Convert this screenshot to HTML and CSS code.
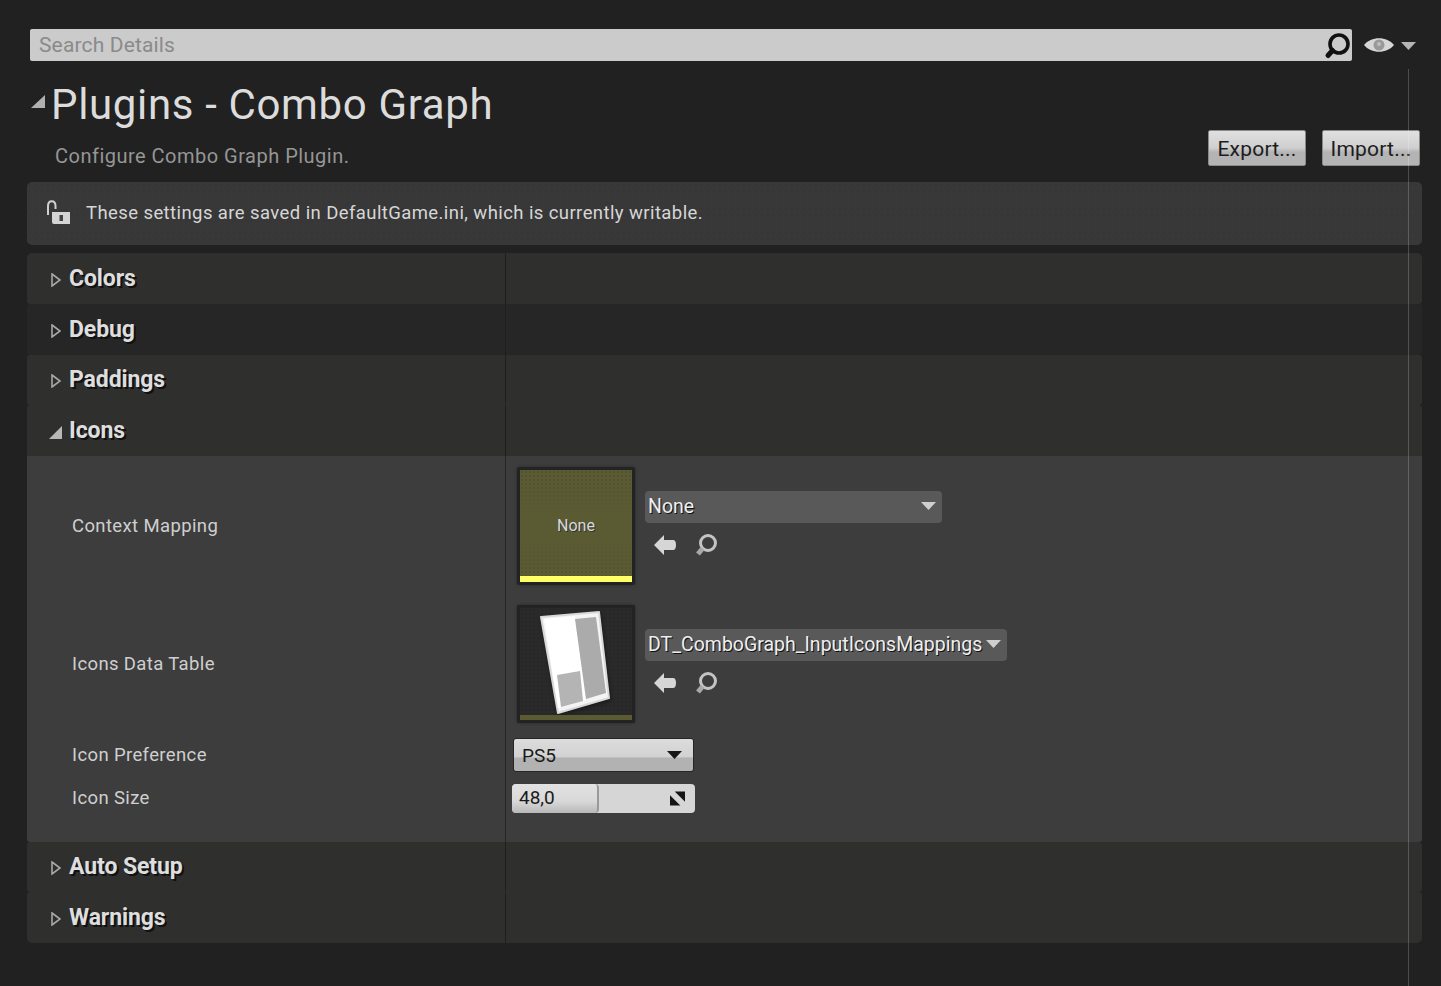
FILE: index.html
```html
<!DOCTYPE html>
<html lang="en">
<head>
  <meta charset="UTF-8">
  <title>Plugins - Combo Graph</title>
  <link rel="stylesheet" href="styles.css">
</head>
<body>
  <div class="search-row">
    <div class="search-box">
      <span class="search-text">Search Details</span>
      <svg class="search-icon" width="30" height="30" viewBox="0 0 30 30"><circle cx="17" cy="14" r="9" fill="none" stroke="#111" stroke-width="3.6"/><path d="M10.5 20.5 L6 25.5" stroke="#111" stroke-width="5" stroke-linecap="round"/></svg>
    </div>
    <svg class="eye" width="32" height="18" viewBox="0 0 32 18"><path d="M1 9 C8 0 24 0 31 9 C24 18 8 18 1 9Z" fill="#d6d6d6"/><circle cx="16" cy="9" r="5.5" fill="#999"/><circle cx="16" cy="8" r="2" fill="#bdbdbd"/></svg>
    <svg class="caret" width="15" height="8" viewBox="0 0 15 8"><path d="M0 0 H15 L7.5 8Z" fill="#b5b5b5"/></svg>
  </div>

  <div class="head">
    <div class="head-left">
      <div class="title-line">
        <svg class="title-arrow" width="14" height="13" viewBox="0 0 14 13"><path d="M14 0 V13 H0Z" fill="#b0b0b0"/></svg>
        <h1 class="title">Plugins - Combo Graph</h1>
      </div>
      <p class="subtitle">Configure Combo Graph Plugin.</p>
    </div>
    <div class="head-buttons">
      <button class="btn">Export...</button>
      <button class="btn">Import...</button>
    </div>
  </div>

  <div class="notice">
    <svg class="lock" width="26" height="26" viewBox="0 0 26 26"><path d="M3 15 V6 C3 -0.5 10.5 -0.5 10.5 6 V9" fill="none" stroke="#cfcfcf" stroke-width="2"/><path d="M7 12 H25 V24 H9 Q7 24 7 22Z" fill="#d4d4d4"/><rect x="14.5" y="15" width="3.5" height="6" fill="#444"/></svg>
    <span>These settings are saved in DefaultGame.ini, which is currently writable.</span>
  </div>

  <div class="sections">
    <div class="section-row first">
      <div class="section-name"><svg class="closed" width="10" height="14" viewBox="0 0 10 14"><path d="M1 1 L9 7 L1 13Z" fill="none" stroke="#a8a8a8" stroke-width="1.6"/></svg>Colors</div>
    </div>
    <div class="section-row dark">
      <div class="section-name"><svg class="closed" width="10" height="14" viewBox="0 0 10 14"><path d="M1 1 L9 7 L1 13Z" fill="none" stroke="#a8a8a8" stroke-width="1.6"/></svg>Debug</div>
    </div>
    <div class="section-row short">
      <div class="section-name"><svg class="closed" width="10" height="14" viewBox="0 0 10 14"><path d="M1 1 L9 7 L1 13Z" fill="none" stroke="#a8a8a8" stroke-width="1.6"/></svg>Paddings</div>
    </div>
    <div class="section-row open-row">
      <div class="section-name"><svg class="open" width="13" height="13" viewBox="0 0 13 13"><path d="M13 0 V13 H0Z" fill="#b8b8b8"/></svg>Icons</div>
    </div>

    <div class="section-body">
      <div class="prop asset-prop">
        <div class="prop-name">Context Mapping</div>
        <div class="prop-value">
          <div class="thumb thumb-none">
            <span class="thumb-label">None</span>
            <div class="thumb-bar yellow"></div>
          </div>
          <div class="asset-side">
            <div class="combo combo-wide"><span>None</span><svg width="15" height="8" viewBox="0 0 15 8"><path d="M0 0 H15 L7.5 8Z" fill="#cfcfcf"/></svg></div>
            <div class="asset-tools">
              <svg width="24" height="22" viewBox="0 0 24 22"><path d="M1 11 L11 1 V6 H20 Q23 6 23 11 Q23 16 20 16 H11 V21Z" fill="#d6d6d6"/></svg>
              <svg width="24" height="24" viewBox="0 0 24 24"><circle cx="14" cy="10" r="7.5" fill="none" stroke="#c4c4c4" stroke-width="3"/><path d="M8.5 15.5 L4 21" stroke="#a8a8a8" stroke-width="5"/></svg>
            </div>
          </div>
        </div>
      </div>

      <div class="prop asset-prop">
        <div class="prop-name">Icons Data Table</div>
        <div class="prop-value">
          <div class="thumb thumb-table">
            <svg class="table-art" width="112" height="112" viewBox="0 0 112 112">
              <path d="M21 9 L79 4 L89 90 L38 105Z" fill="#f4f4f4" stroke="#d8d8d8" stroke-width="2" stroke-linejoin="round"/>
              <path d="M24 11 L55 8 L66 92 L38 100Z" fill="#fff"/>
              <path d="M55 11 L76 9 L86 85 L66 91Z" fill="#ababab"/>
              <path d="M37 67 L60 63 L63 93 L41 99Z" fill="#b4b4b4"/>
            </svg>
            <div class="thumb-bar olive"></div>
          </div>
          <div class="asset-side">
            <div class="combo"><span>DT_ComboGraph_InputIconsMappings</span><svg width="15" height="8" viewBox="0 0 15 8"><path d="M0 0 H15 L7.5 8Z" fill="#cfcfcf"/></svg></div>
            <div class="asset-tools">
              <svg width="24" height="22" viewBox="0 0 24 22"><path d="M1 11 L11 1 V6 H20 Q23 6 23 11 Q23 16 20 16 H11 V21Z" fill="#d6d6d6"/></svg>
              <svg width="24" height="24" viewBox="0 0 24 24"><circle cx="14" cy="10" r="7.5" fill="none" stroke="#c4c4c4" stroke-width="3"/><path d="M8.5 15.5 L4 21" stroke="#a8a8a8" stroke-width="5"/></svg>
            </div>
          </div>
        </div>
      </div>

      <div class="prop small-prop pref-prop">
        <div class="prop-name">Icon Preference</div>
        <div class="prop-value">
          <div class="select"><span>PS5</span><svg width="15" height="8" viewBox="0 0 15 8"><path d="M0 0 H15 L7.5 8Z" fill="#151515"/></svg></div>
        </div>
      </div>

      <div class="prop small-prop size-prop">
        <div class="prop-name">Icon Size</div>
        <div class="prop-value">
          <div class="slider">
            <div class="slider-fill">48,0</div>
            <svg class="slider-icon" width="15" height="15" viewBox="0 0 16 15"><path d="M5 0 H16 V11Z" fill="#151515"/><path d="M0 4 L11 15 H0Z" fill="#151515"/></svg>
          </div>
        </div>
      </div>
    </div>

    <div class="section-row short">
      <div class="section-name"><svg class="closed" width="10" height="14" viewBox="0 0 10 14"><path d="M1 1 L9 7 L1 13Z" fill="none" stroke="#a8a8a8" stroke-width="1.6"/></svg>Auto Setup</div>
    </div>
    <div class="section-row last">
      <div class="section-name"><svg class="closed" width="10" height="14" viewBox="0 0 10 14"><path d="M1 1 L9 7 L1 13Z" fill="none" stroke="#a8a8a8" stroke-width="1.6"/></svg>Warnings</div>
    </div>
  </div>

  <div class="scroll-line"></div>
</body>
</html>
```

FILE: styles.css
```css
html, body {
  height: 100%;
}
body {
  margin: 0;
  height: 986px;
  overflow: hidden;
  position: relative;
  box-sizing: border-box;
  padding: 29px 19px 0 27px;
  background: #212121;
  font-family: Roboto, "Liberation Sans", sans-serif;
  color: #d0d0d0;
}

.search-row {
  display: flex;
  align-items: center;
  padding-left: 3px;
  height: 32px;
  margin-right: -1px;
}
.search-box {
  width: 1322px;
  height: 32px;
  box-sizing: border-box;
  display: flex;
  align-items: center;
  justify-content: space-between;
  padding: 0 0 0 9px;
  background: #cbcbcb;
  border-radius: 2px;
}
.search-text {
  font-size: 21px;
  letter-spacing: 0.15px;
  color: #8a8a8a;
}
.eye {
  margin-left: 11px;
}
.caret {
  margin-left: 6px;
  margin-top: 1px;
}

.head {
  display: flex;
  justify-content: space-between;
  height: 121px;
}
.title-line {
  display: flex;
  align-items: center;
  margin-top: 18px;
  padding-left: 4px;
}
.title-arrow {
  margin-right: 6px;
  margin-top: -7px;
}
.title {
  margin: 0;
  font-size: 42px;
  line-height: 52px;
  font-weight: 400;
  letter-spacing: 0.65px;
  color: #dcdcdc;
}
.subtitle {
  margin: 12px 0 0 28px;
  font-size: 20px;
  line-height: 26px;
  letter-spacing: 0.49px;
  color: #969696;
}
.head-buttons {
  display: flex;
  gap: 16px;
  margin-top: 69px;
  margin-right: 2px;
  align-self: flex-start;
}
.btn {
  width: 98px;
  height: 36px;
  padding: 2px 0 0;
  border: 1px solid #8a8a8a;
  border-radius: 2px;
  font-family: inherit;
  font-size: 21px;
  letter-spacing: 0.2px;
  color: #1c1c1c;
  background: linear-gradient(#e0e0e0 0%, #cfcfcf 50%, #b4b4b4 62%, #b4b4b4 100%);
}

.notice {
  height: 63px;
  box-sizing: border-box;
  display: flex;
  align-items: center;
  padding: 0 0 2px 18px;
  gap: 15px;
  border-radius: 5px;
  background-color: #383838;
  background-image: radial-gradient(#333 0.6px, transparent 0.8px);
  background-size: 6px 6px;
  font-size: 18.5px;
  letter-spacing: 0.41px;
  color: #d6d6d6;
}

.sections {
  margin-top: 8px;
}
.section-row {
  height: 51px;
  box-sizing: border-box;
  background: #2f2f2e;
  border-radius: 3px;
  display: flex;
}
.section-row.short {
  height: 50px;
  padding-bottom: 1px;
}
.section-row.dark {
  background: #262626;
}
.section-row.first {
  border-radius: 5px 5px 3px 3px;
}
.section-row.last {
  border-radius: 3px 3px 5px 5px;
}
.section-row.open-row {
  border-radius: 3px 3px 0 0;
}
.section-name {
  width: 479px;
  box-sizing: border-box;
  border-right: 1px solid #1f1f1f;
  display: flex;
  align-items: center;
  padding-left: 24px;
  font-size: 23px;
  font-weight: 700;
  letter-spacing: -0.1px;
  color: #dedede;
  text-shadow: 2px 2px 0 #111;
}
.section-name .closed {
  margin-right: 8px;
  margin-top: 3px;
}
.section-name .open {
  margin-left: -2px;
  margin-right: 7px;
  margin-top: 4px;
}

.section-body {
  height: 386px;
  box-sizing: border-box;
  padding-top: 1px;
  border-radius: 0 0 3px 3px;
  background: linear-gradient(#262626, #262626) no-repeat 478px 0 / 1px 100%, #3d3d3d;
}
.prop {
  display: flex;
  align-items: center;
}
.prop-name {
  width: 479px;
  flex: none;
  box-sizing: border-box;
  padding-left: 45px;
  font-size: 18.5px;
  letter-spacing: 0.37px;
  color: #cfcfcf;
}
.size-prop .prop-name {
  padding-bottom: 2px;
}
.prop-value {
  display: flex;
  align-items: center;
}
.asset-prop {
  height: 138px;
}
.asset-prop .prop-value {
  padding-left: 11px;
}
.thumb {
  position: relative;
  width: 112px;
  height: 112px;
  border: 3px solid #232323;
  border-radius: 2px;
  box-shadow: 0 0 3px #2a2a2a;
  flex: none;
  overflow: hidden;
}
.thumb-none {
  background-color: #5a5b33;
  display: flex;
  align-items: center;
  justify-content: center;
}
.thumb-none::before {
  content: "";
  position: absolute;
  inset: 0;
  background-image: radial-gradient(#454630 0.6px, transparent 0.8px);
  background-size: 4px 4px;
  -webkit-mask-image: linear-gradient(#000, transparent 40%, transparent 60%, #000);
  mask-image: linear-gradient(#000, transparent 40%, transparent 60%, #000);
}
.thumb-label {
  position: relative;
  margin-top: -2px;
  font-size: 16px;
  color: #d8d8d8;
  text-shadow: 1px 1px 0 #333;
}
.thumb-table {
  background-color: #2a2a2a;
  background-image: radial-gradient(#242424 0.6px, transparent 0.8px);
  background-size: 4px 4px;
}
.table-art {
  display: block;
  filter: drop-shadow(1px 2px 2px #1a1a1a);
}
.thumb-bar {
  position: absolute;
  left: 0;
  right: 0;
  bottom: 0;
}
.thumb-bar.yellow {
  height: 6px;
  background: #ffff66;
}
.thumb-bar.olive {
  height: 5px;
  background: #5a5b33;
}
.asset-side {
  margin-left: 10px;
  display: flex;
  flex-direction: column;
  align-items: flex-start;
  padding-bottom: 4px;
}
.combo {
  height: 32px;
  box-sizing: border-box;
  padding: 0 6px 2px 3px;
  display: flex;
  align-items: center;
  gap: 4px;
  border-radius: 4px;
  background: #595959;
  font-size: 19.5px;
  color: #efefef;
  text-shadow: 1px 1px 0 #111;
}
.combo-wide {
  width: 297px;
  justify-content: space-between;
}
.asset-tools {
  display: flex;
  align-items: center;
  gap: 17px;
  margin: 10px 0 0 8px;
}

.small-prop .prop-value {
  padding-left: 7px;
}
.pref-prop {
  height: 34px;
  margin-top: 5px;
}
.size-prop {
  height: 29px;
  margin-top: 12px;
}
.select {
  width: 181px;
  height: 34px;
  box-sizing: border-box;
  padding: 0 11px 0 8px;
  display: flex;
  align-items: center;
  justify-content: space-between;
  border: 1px solid #262626;
  border-radius: 3px;
  background: linear-gradient(#dcdcdc 0%, #d2d2d2 55%, #b2b2b2 60%, #b2b2b2 100%);
  font-size: 19px;
  color: #1a1a1a;
}
.slider {
  position: relative;
  width: 183px;
  height: 29px;
  margin-left: -1px;
  border-radius: 4px;
  background: #d6d6d6;
  overflow: hidden;
}
.slider-fill {
  width: 87px;
  height: 29px;
  box-sizing: border-box;
  padding-left: 7px;
  line-height: 28px;
  font-size: 19px;
  color: #1a1a1a;
  border-right: 2px solid #9a9a9a;
  border-radius: 4px;
  background: linear-gradient(#e2e2e2 0%, #d8d8d8 60%, #b8b8b8 100%);
}
.slider-icon {
  position: absolute;
  right: 10px;
  top: 7px;
}

.scroll-line {
  position: absolute;
  left: 1408px;
  top: 69px;
  bottom: 0;
  width: 1px;
  background: rgba(255, 255, 255, 0.2);
}
```
